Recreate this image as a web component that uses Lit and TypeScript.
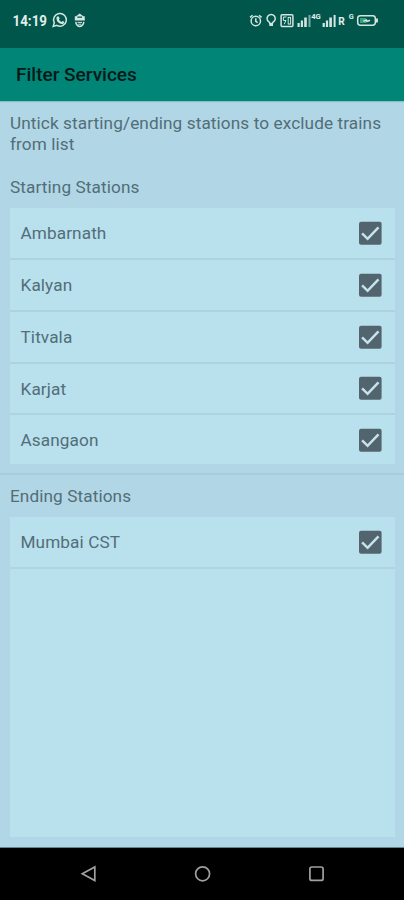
import { LitElement, html, css, svg } from "lit";
import { customElement, property } from "lit/decorators.js";

@customElement("status-bar")
class StatusBar extends LitElement {
  static styles = css`
    :host { display: flex; height: 48px; background: #00564b; align-items: flex-start; justify-content: space-between; }
    svg { display: block; flex: none; }
    text { font-family: Roboto, sans-serif; font-weight: 700; fill: #e3eeec; }
    .line { fill: none; stroke: #d5e5e2; stroke-width: 1.5; }
    .thin { fill: none; stroke: #d5e5e2; stroke-width: 1; }
    .solid { fill: #d5e5e2; }
    .dim { fill: #7fa9a3; }
    .cut { fill: #00564b; }
  `;
  private bars(x: number, last: string) {
    return svg`
      <rect class="solid" x=${x} y="23" width="2.2" height="4"></rect>
      <rect class="solid" x=${x + 3.3} y="20.5" width="2.2" height="6.5"></rect>
      <rect class="solid" x=${x + 6.7} y="17.5" width="2.6" height="9.5"></rect>
      <rect class=${last} x=${x + 11} y="15" width="2" height="12"></rect>`;
  }
  render() {
    return html`
      <svg width="120" height="48" viewBox="0 0 120 48">
        <text x="12.5" y="26.2" font-size="13.8" textLength="34.5" lengthAdjust="spacingAndGlyphs">14:19</text>
        <path class="line" d="M53.2 26.4 54.3 22.8A6.4 6.4 0 1 1 56.8 25.4Z"></path>
        <path class="solid" d="M57.2 16.6 58.8 16.4 59.7 18.5 58.9 19.6Q59.8 21.4 61.5 22L62.6 21 64.5 22.1Q64 24.2 62.2 24.2 56.8 23.4 56.4 18.3Q56.5 17.1 57.2 16.6Z"></path>
        <path class="solid" d="M76 16.2 79.7 13.4 83.4 16.2H84.8V20.4H74.8V16.2Z"></path>
        <path class="cut" d="M77.4 16.5H82V17.8H77.4Z"></path>
        <path class="line" d="M75.8 21.8Q76.2 25.6 79.7 26.5 83.4 25.6 83.8 21.8"></path>
        <path class="thin" d="M77.5 22.4H82M78.3 24.2H81.2"></path>
      </svg>
      <svg width="164" height="48" viewBox="240 0 164 48">
        <circle class="line" cx="255.8" cy="21" r="4.7"></circle>
        <path class="line" d="M250 17.4 252.6 15.2M261.6 17.4 259 15.2M255.8 18.2V21.4L257.6 22.6"></path>
        <path class="line" d="M269.3 22.2A4.1 4.1 0 1 1 273 22.2L272.4 23.4H269.9Z"></path>
        <path class="solid" d="M269.3 23H273V26H269.3Z"></path>
        <rect class="line" x="281.1" y="14.7" width="11.8" height="11.8" rx="1"></rect>
        <path class="thin" d="M286.5 17H283.4V20.5H286L284.2 24.2M288.2 17V24.3M290.6 17V24.3M288 17.4H291M288 24H291"></path>
        ${this.bars(297.5, "dim")}
        <text x="311.2" y="19" font-size="8" textLength="9.6" lengthAdjust="spacingAndGlyphs">4G</text>
        ${this.bars(322.6, "solid")}
        <text x="338.3" y="25.3" font-size="11.4" textLength="6.5" lengthAdjust="spacingAndGlyphs">R</text>
        <text x="348.8" y="19.3" font-size="8" textLength="5" lengthAdjust="spacingAndGlyphs">G</text>
        <rect class="line" x="357.7" y="15.7" width="17.6" height="9.5" rx="2.6"></rect>
        <rect class="solid" x="376" y="18.5" width="1.9" height="4"></rect>
        <rect x="360" y="18" width="6" height="5" fill="#36a276"></rect>
        <path class="line" d="M363.5 21.2 366.5 20 367 21.4 370 20.2"></path>
      </svg>`;
  }
}

@customElement("station-row")
class StationRow extends LitElement {
  @property() name = "";
  static styles = css`
    :host { display: flex; align-items: center; justify-content: space-between; height: 50px; padding: 0 13.5px 0 10.5px; color: #526e78; }
    span { line-height: 20px; padding-top: 0.6px; }
    svg { display: block; }
  `;
  render() {
    return html`<span>${this.name}</span>
      <svg width="24" height="24" viewBox="0 0 24 24">
        <rect x="1" y="0.8" width="22.6" height="23" rx="2" fill="#52656e"></rect>
        <path d="M4.1 12.4 9.6 17.8 20.5 6.4" fill="none" stroke="#c6e3ed" stroke-width="2.5"></path>
      </svg>`;
  }
}

@customElement("nav-bar")
class NavBar extends LitElement {
  static styles = css`
    :host { display: flex; justify-content: center; align-items: center; gap: 94px; height: 52px; background: #000; }
    svg { display: block; fill: none; stroke: #a0a0a0; stroke-width: 1.7; }
  `;
  render() {
    return html`
      <svg width="20" height="20" viewBox="0 0 20 20"><path d="M4.3 9.8 16.8 2.9V16.6Z"></path></svg>
      <svg width="20" height="20" viewBox="0 0 20 20"><circle cx="10.6" cy="9.8" r="7"></circle></svg>
      <svg width="20" height="20" viewBox="0 0 20 20"><rect x="3.9" y="3" width="13.2" height="13.4" rx="2"></rect></svg>`;
  }
}

@customElement("app-root")
class AppRoot extends LitElement {
  private starting = ["Ambarnath", "Kalyan", "Titvala", "Karjat", "Asangaon"];
  private ending = ["Mumbai CST"];
  static styles = css`
    :host { display: flex; flex-direction: column; width: 404px; height: 900px; overflow: hidden; font-family: Roboto, sans-serif; background: #b1d6e5; color: #526e78; }
    .toolbar { box-sizing: border-box; height: 53px; padding: 0 16px; background: #008577; color: #021a17; font-size: 19px; font-weight: 500; line-height: 54px; box-shadow: 0 1px 1px #8fbcc2; }
    main { flex: 1; min-height: 0; display: flex; flex-direction: column; font-size: 17.2px; letter-spacing: 0.1px; }
    .hint { margin: 12px 10px 0; line-height: 20.5px; white-space: nowrap; }
    .heading { padding: 0 10px; line-height: 22px; margin: 22px 0 10px; font-size: inherit; font-weight: 400; }
    .list { flex: none; margin: 0 9px 0 10px; background: #b9e0ed; box-sizing: border-box; }
    station-row + station-row { border-top: 2px solid #add3e1; }
    .first { height: 256px; display: grid; grid-template-rows: 50px repeat(3, 51.75px) 50.75px; }
    .first station-row { height: auto; }
    .split { height: 2px; background: #a8ccda; margin-top: 9px; flex: none; }
    .second-heading { margin: 10px 0 10px; }
    .second { height: 320px; }
    .second station-row { border-bottom: 2px solid #afd5e3; }
    nav-bar { border-top: 1px solid #66868d; }
  `;
  render() {
    return html`
      <status-bar></status-bar>
      <div class="toolbar">Filter Services</div>
      <main>
        <div class="hint">Untick starting/ending stations to exclude trains<br />from list</div>
        <h2 class="heading">Starting Stations</h2>
        <div class="list first">${this.starting.map((s) => html`<station-row .name=${s}></station-row>`)}</div>
        <div class="split"></div>
        <h2 class="heading second-heading">Ending Stations</h2>
        <div class="list second">${this.ending.map((s) => html`<station-row .name=${s}></station-row>`)}</div>
      </main>
      <nav-bar></nav-bar>`;
  }
}
